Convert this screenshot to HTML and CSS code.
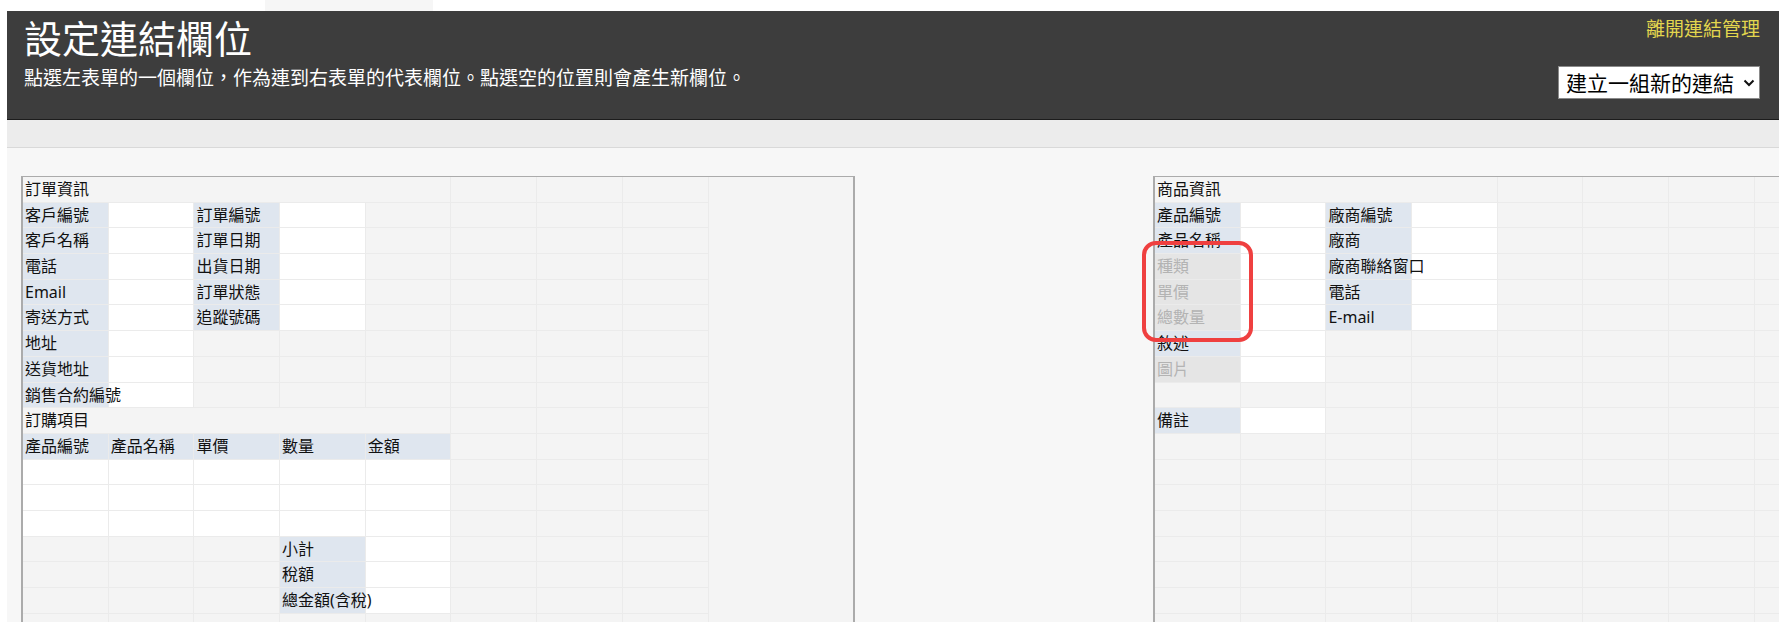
FILE: index.html
```html
<!DOCTYPE html>
<html lang="zh-Hant">
<head>
  <meta charset="UTF-8">
  <meta name="viewport" content="width=device-width, initial-scale=1.0">
  <title>設定連結欄位</title>
  <link rel="stylesheet" href="styles.css">
</head>
<body>
  <div class="page">
    <div class="topstrip"><div class="tab"></div></div>
    <header class="header">
      <div class="intro">
        <h1>設定連結欄位</h1>
        <p class="hint">點選左表單的一個欄位，作為連到右表單的代表欄位。點選空的位置則會產生新欄位。</p>
      </div>
      <div class="side">
        <a href="#" class="leave">離開連結管理</a>
        <div class="pick">
          <select>
            <option>建立一組新的連結</option>
          </select>
          <svg class="chev" width="12" height="8" viewBox="0 0 12 8"><path d="M1.5 1.5 L6 6 L10.5 1.5" fill="none" stroke="#111" stroke-width="2"/></svg>
        </div>
      </div>
    </header>
    <div class="toolbar"></div>
    <div class="work">
      <div class="form"><div class="grid" id="left-form"></div></div>
      <div class="form">
        <div class="grid" id="right-form"></div>
        <div class="mark"></div>
      </div>
    </div>
  </div>
  <script>
    // h5:text = header cell spanning 5 cols, l = label, o = disabled label, i = input, . = empty
    const LEFT = [
      ['h5:訂單資訊'],
      ['l:客戶編號', 'i', 'l:訂單編號', 'i'],
      ['l:客戶名稱', 'i', 'l:訂單日期', 'i'],
      ['l:電話', 'i', 'l:出貨日期', 'i'],
      ['l:Email', 'i', 'l:訂單狀態', 'i'],
      ['l:寄送方式', 'i', 'l:追蹤號碼', 'i'],
      ['l:地址', 'i'],
      ['l:送貨地址', 'i'],
      ['l:銷售合約編號', 'i'],
      ['h5:訂購項目'],
      ['l:產品編號', 'l:產品名稱', 'l:單價', 'l:數量', 'l:金額'],
      ['i', 'i', 'i', 'i', 'i'],
      ['i', 'i', 'i', 'i', 'i'],
      ['i', 'i', 'i', 'i', 'i'],
      ['.', '.', '.', 'l:小計', 'i'],
      ['.', '.', '.', 'l:稅額', 'i'],
      ['.', '.', '.', 'l:總金額(含稅)', 'i'],
      [], [], []
    ];
    const RIGHT = [
      ['h4:商品資訊'],
      ['l:產品編號', 'i', 'l:廠商編號', 'i'],
      ['l:產品名稱', 'i', 'l:廠商', 'i'],
      ['o:種類', 'i', 'l:廠商聯絡窗口', 'i'],
      ['o:單價', 'i', 'l:電話', 'i'],
      ['o:總數量', 'i', 'l:E-mail', 'i'],
      ['l:敘述', 'i'],
      ['o:圖片', 'i'],
      [],
      ['l:備註', 'i'],
      [], [], [], [], [], [], [], [], [], []
    ];
    const CLS = { l: 'lbl', o: 'off', i: 'in', '.': '' };
    const COLS = 8;

    function renderForm(el, rows) {
      let html = '';
      rows.forEach(row => {
        let used = 0;
        row.forEach(tok => {
          const i = tok.indexOf(':');
          const kind = i < 0 ? tok : tok.slice(0, i);
          const text = i < 0 ? '' : tok.slice(i + 1);
          if (kind[0] === 'h') {
            html += `<div class="cell head span${kind.slice(1)}">${text}</div>`;
            used += Number(kind.slice(1));
          } else {
            html += `<div class="cell ${CLS[kind]}">${text}</div>`;
            used++;
          }
        });
        for (; used < COLS; used++) html += '<div class="cell"></div>';
      });
      el.innerHTML = html;
    }
    renderForm(document.getElementById('left-form'), LEFT);
    renderForm(document.getElementById('right-form'), RIGHT);
  </script>
</body>
</html>
```

FILE: styles.css
```css
* {
  box-sizing: border-box;
}
html, body {
  margin: 0;
  height: 100%;
}
body {
  background: #fff;
  font-family: 'Noto Sans', 'Noto Sans CJK TC', sans-serif;
  overflow: hidden;
}
.page {
  margin-left: 7px;
  width: 1772px;
  height: 622px;
  display: flex;
  flex-direction: column;
}
.topstrip {
  height: 11px;
  flex: none;
}
.topstrip .tab {
  margin-left: 258px;
  width: 168px;
  height: 11px;
  background: #f6f6f6;
}
/* dark title bar */
.header {
  flex: none;
  height: 109px;
  background: #3d3d3d;
  border-bottom: 1px solid #1c1c1c;
  color: #fff;
  display: flex;
  justify-content: space-between;
  padding: 8px 19px 0 17px;
}
.header h1 {
  margin: 0;
  font-size: 38px;
  line-height: 38px;
  font-weight: normal;
}
.hint {
  margin: 12px 0 0;
  font-size: 19px;
  line-height: 19px;
}
.side {
  display: flex;
  flex-direction: column;
  align-items: flex-end;
}
.leave {
  margin-top: 1px;
  color: #e3d64e;
  font-size: 19px;
  line-height: 19px;
  text-decoration: none;
}
.pick {
  position: relative;
  margin-top: 27px;
}
.pick select {
  appearance: none;
  -webkit-appearance: none;
  height: 33px;
  width: 202px;
  padding: 0 0 0 7px;
  font-family: inherit;
  font-size: 21px;
  color: #000;
  background: #fff;
  border: 1px solid #8a8a8a;
  border-radius: 0;
}
.pick .chev {
  position: absolute;
  right: 5px;
  top: 13px;
  pointer-events: none;
}
.toolbar {
  flex: none;
  height: 28px;
  background: #ececec;
  border-bottom: 1px solid #d9d9d9;
}
/* the two forms */
.work {
  flex: 1;
  background: #f7f7f7;
  display: flex;
  gap: 298px;
  padding: 28px 0 0 14px;
  overflow: hidden;
}
.form {
  flex: none;
  position: relative;
  width: 834px;
  background: #f4f4f4;
  border: 2px solid #ababab;
  border-top-width: 1px;
  border-bottom: none;
  align-self: flex-start;
}
.grid {
  display: grid;
  grid-template-columns: repeat(8, 84.7px);
  grid-auto-rows: 24.7px;
  gap: 1px;
  width: max-content;
  padding-right: 1px;
  background: #ebebeb;
}
.cell {
  background: #f4f4f4;
  color: #111;
  font-size: 16px;
  line-height: 24.7px;
  padding-left: 2px;
  white-space: nowrap;
}
.cell.span4 { grid-column: span 4; }
.cell.span5 { grid-column: span 5; }
.cell.lbl {
  background: #dfe6ef;
  position: relative;
  z-index: 1;
}
.cell.in { background: #fff; }
.cell.off {
  background: #e5e5e5;
  color: #b3b3b3;
}
.mark {
  position: absolute;
  left: -13px;
  top: 64px;
  width: 111px;
  height: 101px;
  border: 4px solid #ef4040;
  border-radius: 14px;
  z-index: 2;
}
```
